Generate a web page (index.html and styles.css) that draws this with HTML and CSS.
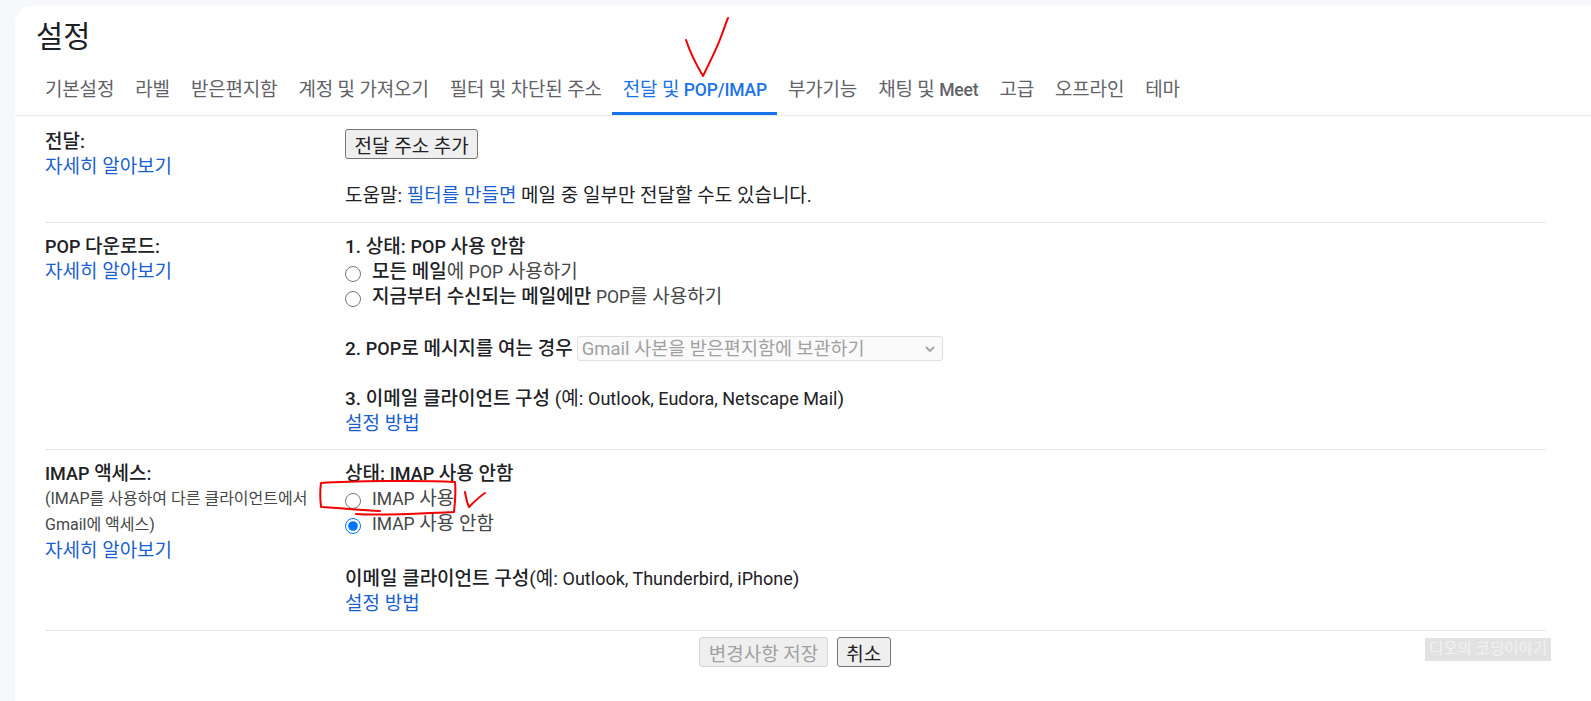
FILE: index.html
```html
<!DOCTYPE html>
<html lang="ko">
<head>
  <meta charset="UTF-8" />
  <meta name="viewport" content="width=device-width, initial-scale=1.0"/>
  <title>설정</title>
  <link rel="stylesheet" href="styles.css">
</head>
<body>
  <div class="card">
    <h1>설정</h1>

    <nav class="tabs">
      <a href="#">기본설정</a>
      <a href="#">라벨</a>
      <a href="#">받은편지함</a>
      <a href="#">계정 및 가져오기</a>
      <a href="#">필터 및 차단된 주소</a>
      <a href="#" class="active">전달 및 <span class="en">POP/IMAP</span></a>
      <a href="#">부가기능</a>
      <a href="#">채팅 및 <span class="en">Meet</span></a>
      <a href="#">고급</a>
      <a href="#">오프라인</a>
      <a href="#">테마</a>
    </nav>

    <div class="settings">
      <section class="row row-forward">
        <div class="side">
          <div class="side-title">전달:</div>
          <a href="#">자세히 알아보기</a>
        </div>
        <div class="main">
          <button type="button" class="btn btn-add">전달 주소 추가</button>
          <p class="help">도움말: <a href="#">필터를 만들면</a> 메일 중 일부만 전달할 수도 있습니다.</p>
        </div>
      </section>

      <section class="row row-pop">
        <div class="side">
          <div class="side-title"><span class="en">POP</span> 다운로드:</div>
          <a href="#">자세히 알아보기</a>
        </div>
        <div class="main">
          <div class="line"><b>1. 상태: <span class="en">POP</span> 사용 안함</b></div>
          <label class="radio"><input type="radio" name="pop" /><span><b>모든 메일</b>에 <span class="en">POP</span> 사용하기</span></label>
          <label class="radio"><input type="radio" name="pop" /><span><b>지금부터 수신되는 메일에만</b> <span class="en">POP</span>를 사용하기</span></label>
          <div class="line line-select">
            <b>2. <span class="en">POP</span>로 메시지를 여는 경우</b>
            <div class="select-wrap">
              <select disabled>
                <option>Gmail 사본을 받은편지함에 보관하기</option>
              </select>
              <svg class="chevron" width="10" height="7" viewBox="0 0 10 7" fill="none" stroke="#a6a6a6" stroke-width="2"><path d="M1 1l4 4 4-4" /></svg>
            </div>
          </div>
          <div class="line line-client"><b>3. 이메일 클라이언트 구성</b> (예: <span class="en">Outlook, Eudora, Netscape Mail</span>)</div>
          <div class="line"><a href="#">설정 방법</a></div>
        </div>
      </section>

      <section class="row row-imap">
        <div class="side">
          <div class="side-title"><span class="en">IMAP</span> 액세스:</div>
          <div class="side-note">(<span class="en">IMAP</span>를 사용하여 다른 클라이언트에서 <span class="en">Gmail</span>에 액세스)</div>
          <a href="#">자세히 알아보기</a>
        </div>
        <div class="main">
          <div class="line"><b>상태: <span class="en">IMAP</span> 사용 안함</b></div>
          <label class="radio"><input type="radio" name="imap" /><span><span class="en">IMAP</span> 사용</span></label>
          <label class="radio"><input type="radio" name="imap" checked /><span><span class="en">IMAP</span> 사용 안함</span></label>
          <div class="line line-client2"><b>이메일 클라이언트 구성</b>(예: <span class="en">Outlook, Thunderbird, iPhone</span>)</div>
          <div class="line"><a href="#">설정 방법</a></div>
        </div>
      </section>

      <div class="actions">
        <button type="button" class="btn btn-save" disabled>변경사항 저장</button>
        <button type="button" class="btn btn-cancel">취소</button>
      </div>
    </div>
  </div>

  <!-- 캡처 위에 덧그린 표시 -->
  <svg class="marks" width="1591" height="701" viewBox="0 0 1591 701" fill="none" stroke="#f00000" stroke-width="2" stroke-linecap="round" stroke-linejoin="round">
    <path d="M686 40 C690 52 697 66 703 76 C711 60 718 46 722 34 C725 27 726 22 728 18" />
    <path d="M380 511 C360 510 340 508 321 507 C320 498 320 490 321 483 C350 481 420 480 455 482 C456 492 455 503 454 512 C425 513 385 516 356 514" />
    <path d="M465 492 C466 498 467 503 469 507 C474 502 480 496 485 493" />
  </svg>

  <div class="watermark">디오의 코딩이야기</div>
</body>
</html>
```

FILE: styles.css
```css
* { box-sizing: border-box; }
html, body { height: 100%; }
body { margin: 0; background: #f6f8fc; color: #202124; font-family: Roboto, "Noto Sans CJK KR", sans-serif; font-size: 19px; overflow: hidden; }
a { color: #1a5fd0; text-decoration: none; }
b { font-weight: 500; }
.en { font-size: 18px; }

.card { margin: 6px 0 0 15px; height: 695px; background: #fff; border-radius: 16px 0 0 0; }
h1 { margin: 0; padding: 15px 0 0 21px; height: 57px; font-size: 29.5px; line-height: 32px; font-weight: 400; }

.tabs { display: flex; height: 53px; padding-left: 19.5px; border-bottom: 1px solid #e8eaed; letter-spacing: -0.17px; }
.tabs a { padding: 13px 10.5px 0; color: #5f6368; line-height: 27px; }
.tabs .en { font-size: 17.5px; font-weight: 500; }
.tabs a.active { color: #1a73e8; border-bottom: 3px solid #1a73e8; }

.settings { padding: 0 46px 0 30px; }
.row { display: grid; grid-template-columns: 300px 1fr; border-bottom: 1px solid #e3e3e3; line-height: 25px; }
.row-forward { height: 107px; padding-top: 13px; }
.row-pop { height: 227px; padding-top: 11px; }
.row-imap { height: 181px; padding-top: 11px; }

.side a { display: block; }
.side-title { font-weight: 500; }
.side-note { font-size: 16px; line-height: 26px; color: #444746; width: 280px; }
.side-note .en { font-size: 16px; }

.btn { display: block; height: 30px; font-family: inherit; font-size: 19px; color: #202124; background: #efefef; border: 1px solid #767676; border-radius: 3px; padding: 0 8.5px; }
.help { margin: 24px 0 0; }

.line { height: 25px; }
.radio { display: flex; align-items: flex-start; gap: 11px; height: 25px; color: #444746; }
.radio b { color: #202124; }
.radio .en { font-size: 17.5px; }
.radio input { margin: 7px 0 0; width: 16px; height: 16px; flex: none; }

.line-select { display: flex; align-items: center; gap: 4px; height: 25px; margin-top: 27px; }
.select-wrap { position: relative; display: flex; }
select { appearance: none; width: 366px; height: 25px; font-family: inherit; font-size: 18.5px; padding: 0 0 0 4px; background: #fafafa; border: 1px solid #e0e0e0; border-radius: 3px; color: #a0a0a0; opacity: 1; }
.chevron { position: absolute; right: 8px; top: 10px; }
.line-client { margin-top: 25px; }
.line-client2 { margin-top: 30px; }

.actions { display: flex; justify-content: center; gap: 9px; padding-top: 6px; }
.btn-save { color: #a0a0a0; border-color: #d4d4d4; }

.marks { position: absolute; left: 0; top: 0; pointer-events: none; }
.watermark { position: absolute; left: 1425px; top: 638px; width: 126px; height: 23px; background: #e2e2e2; color: #f1f1f1; font-size: 15.5px; line-height: 23px; text-align: center; white-space: nowrap; overflow: hidden; }
```
